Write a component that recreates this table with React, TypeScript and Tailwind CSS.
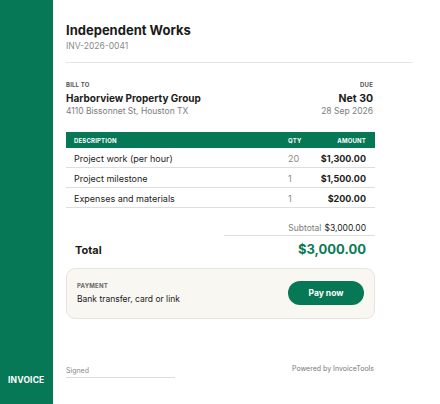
import React from 'react';

const items = [
  { desc: 'Project work (per hour)', qty: 20, amount: '$1,300.00' },
  { desc: 'Project milestone', qty: 1, amount: '$1,500.00' },
  { desc: 'Expenses and materials', qty: 1, amount: '$200.00' },
];

const App = () => {
  return (
    <div className="flex h-[404px] w-[440px] bg-white text-[#1b1b1b] font-['Inter',sans-serif]">
      {/* Sidebar */}
      <aside className="flex w-[53px] shrink-0 flex-col justify-end bg-[#077856] pb-[17px] pl-[8px]">
        <span className="text-[8.5px] font-bold tracking-[0.02em] text-white">INVOICE</span>
      </aside>

      <main className="flex flex-1 flex-col pl-[13px] pr-[27px] pt-[22px]">
        {/* Header */}
        <div className="border-b border-[#e4e4e4] pb-[10px]">
          <h1 className="text-[13px] font-bold leading-[17px]">Independent Works</h1>
          <p className="mt-[2px] text-[8.5px] leading-[11px] text-[#8a8a8a]">INV-2026-0041</p>
        </div>

        <div className="flex w-[309px] flex-col">
          {/* Bill to / due */}
          <div className="mt-[18px] flex justify-between pr-[2px]">
            <div>
              <div className="text-[6px] font-bold leading-[8px] tracking-[0.03em] text-[#555]">BILL TO</div>
              <div className="mt-[3px] text-[10px] font-bold leading-[13px]">Harborview Property Group</div>
              <div className="mt-[1px] text-[8.5px] leading-[11px] text-[#7c7c7c]">4110 Bissonnet St, Houston TX</div>
            </div>
            <div className="text-right">
              <div className="text-[6px] font-bold leading-[8px] tracking-[0.03em] text-[#555]">DUE</div>
              <div className="mt-[3px] text-[10.5px] font-bold leading-[13px]">Net 30</div>
              <div className="mt-[1px] text-[8.5px] leading-[11px] text-[#7c7c7c]">28 Sep 2026</div>
            </div>
          </div>

          {/* Table */}
          <div className="mt-[15px]">
            <div className="flex h-[16px] items-center bg-[#077856] pl-[8px] pr-[9px] text-[6px] font-bold tracking-[0.03em] text-white">
              <span className="flex-1">DESCRIPTION</span>
              <span className="w-[20px]">QTY</span>
              <span className="w-[58px] text-right">AMOUNT</span>
            </div>
            {items.map((it) => (
              <div
                key={it.desc}
                className="flex h-[20px] items-center border-b border-[#dedede] pl-[8px] pr-[9px] pt-[3px] text-[9px]"
              >
                <span className="flex-1">{it.desc}</span>
                <span className="w-[20px] text-[#8a8a8a]">{it.qty}</span>
                <span className="w-[58px] text-right font-bold">{it.amount}</span>
              </div>
            ))}
          </div>

          {/* Totals */}
          <div className="flex flex-col items-end">
            <div className="mt-[15px] flex w-[151px] justify-end gap-[3px] border-b border-[#dedede] pb-[1px] pr-[9px] text-[8.5px] leading-[11px]">
              <span className="text-[#7c7c7c]">Subtotal</span>
              <span>$3,000.00</span>
            </div>
          </div>
          <div className="mt-[4px] flex items-center justify-between pl-[9px] pr-[9px]">
            <span className="text-[11px] font-bold">Total</span>
            <span className="text-[13px] font-bold text-[#0a7a55]">$3,000.00</span>
          </div>

          {/* Payment */}
          <div className="mt-[8px] flex h-[51px] items-center justify-between rounded-[9px] border border-[#e6e4dc] bg-[#f8f7f2] pl-[10px] pr-[10px]">
            <div>
              <div className="text-[6px] font-bold leading-[8px] tracking-[0.03em] text-[#666]">PAYMENT</div>
              <div className="mt-[4px] text-[8.5px] leading-[11px]">Bank transfer, card or link</div>
            </div>
            <button className="h-[24px] w-[76px] rounded-full bg-[#077856] text-[8.5px] font-bold text-white">
              Pay now
            </button>
          </div>
        </div>

        {/* Footer */}
        <div className="mt-auto mb-[26px] flex w-[309px] items-end justify-between">
          <div className="w-[109px] border-b border-[#dcdcdc] pb-[2px] text-[7px] leading-[9px] text-[#888]">Signed</div>
          <div className="pb-[5px] pr-[1px] text-[7px] leading-[9px] text-[#777]">Powered by InvoiceTools</div>
        </div>
      </main>
    </div>
  );
};

export default App;
